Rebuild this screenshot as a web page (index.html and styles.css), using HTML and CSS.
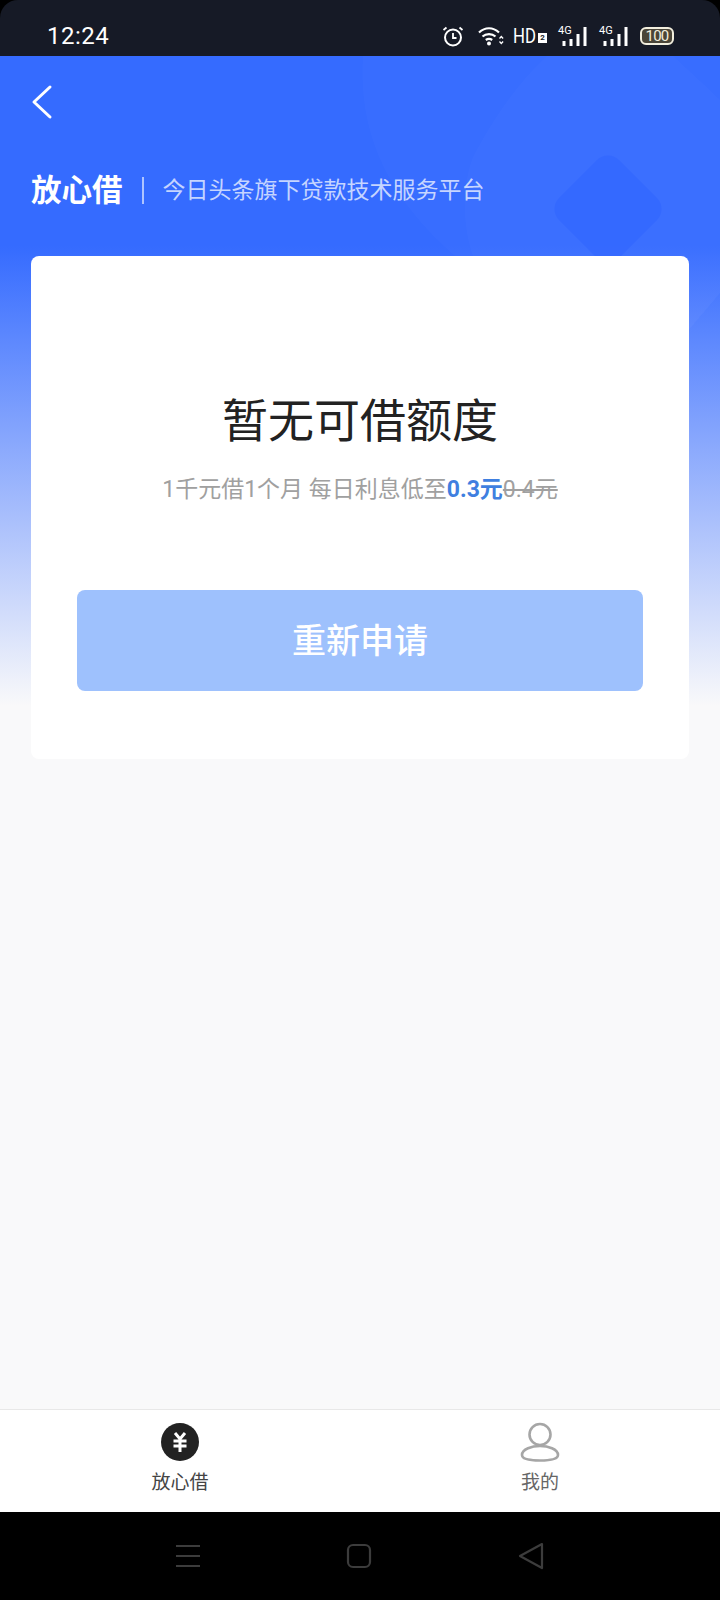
FILE: index.html
```html
<!DOCTYPE html>
<html lang="zh-CN">
<head>
    <meta charset="UTF-8">
    <meta name="viewport" content="width=device-width, initial-scale=1.0">
    <title>放心借</title>
    <link rel="stylesheet" href="styles.css">
</head>
<body>
    <div class="screen">
        <div class="status-bar">
            <span class="clock">12:24</span>
            <div class="status-icons">
                <svg class="alarm" width="22" height="22" viewBox="0 0 22 22" fill="none" stroke="#fff">
                    <circle cx="11" cy="12.500" r="8" stroke-width="2"/>
                    <path d="M11 8v5h3.500" stroke-width="1.800"/>
                    <path d="M1.500 5 4.500 2.500M20.500 5 17.500 2.500" stroke-width="1.800"/>
                </svg>
                <svg class="wifi" width="26" height="20" viewBox="0 0 26 20" fill="none" stroke="#fff" stroke-width="2.200">
                    <path d="M1 6.500C7 .8 15 .8 21 6.500"/>
                    <path d="M4.500 10.500C8 7.300 14 7.300 17.500 10.500"/>
                    <path d="M7.800 14C9.800 12.500 12.200 12.500 14.200 14"/>
                    <circle cx="11" cy="17.500" r="2" fill="#fff" stroke="none"/>
                    <path d="M21.500 12.500l1.800-2 1.800 2M21.500 15.500l1.800 2 1.800-2" stroke-width="1.300"/>
                </svg>
                <span class="hd"><span class="hd-text">HD</span><b>2</b></span>
                <span class="signal"><i>4G</i><svg width="29" height="20" viewBox="0 0 29 20" fill="#fff"><rect x="4.500" y="15" width="3" height="5"/><rect x="11.500" y="13" width="3" height="7"/><rect x="18.500" y="8" width="3" height="12"/><rect x="25.500" y="1" width="3" height="19"/></svg></span>
                <span class="signal"><i>4G</i><svg width="29" height="20" viewBox="0 0 29 20" fill="#fff"><rect x="4.500" y="15" width="3" height="5"/><rect x="11.500" y="13" width="3" height="7"/><rect x="18.500" y="8" width="3" height="12"/><rect x="25.500" y="1" width="3" height="19"/></svg></span>
                <span class="battery">100</span>
            </div>
        </div>

        <div class="page">
            <svg class="hero-art" width="720" height="330" viewBox="0 0 720 330">
                <path d="M363 56C358 130 385 195 455 256L490 330H689L720 293V56Z" fill="#fff" opacity="0.018"/>
                <path d="M547 56C515 85 490 125 473 157C462 185 462 225 473 256L490 330H689L720 293V100C705 85 690 72 673 56Z" fill="#fff" opacity="0.018"/>
                <rect x="565.500" y="166.500" width="85" height="85" rx="16" transform="rotate(45 608 209)" fill="#2f64ff" opacity="0.55"/>
            </svg>

            <div class="nav">
                <svg width="24" height="36" viewBox="0 0 24 36" fill="none" stroke="#fff" stroke-width="3" stroke-linecap="round" stroke-linejoin="round">
                    <path d="M19 3 3 18 19 33"/>
                </svg>
            </div>

            <div class="brand">
                <span class="brand-name">放心借</span>
                <span class="brand-line"></span>
                <span class="brand-desc">今日头条旗下贷款技术服务平台</span>
            </div>

            <div class="card">
                <h1>暂无可借额度</h1>
                <p class="rate">1千元借1个月 每日利息低至<b>0.3元</b><s>0.4元</s></p>
                <button class="apply" type="button">重新申请</button>
            </div>
        </div>

        <div class="tabbar">
            <div class="tab tab-active">
                <svg width="40" height="40" viewBox="0 0 40 40">
                    <circle cx="20" cy="20" r="19" fill="#222"/>
                    <path d="M15 11l5 6 5-6M13.500 19h13M13.500 24h13M20 17v13" fill="none" stroke="#fff" stroke-width="3"/>
                </svg>
                <span>放心借</span>
            </div>
            <div class="tab">
                <svg width="40" height="40" viewBox="0 0 40 40" fill="none" stroke="#a6a6a6" stroke-width="2.600">
                    <circle cx="20" cy="12.500" r="10.500"/>
                    <path d="M2 33C2 27 12 24 20 24C28 24 38 27 38 33C38 38 28 38.500 20 38.500C12 38.500 2 38 2 33Z"/>
                </svg>
                <span>我的</span>
            </div>
        </div>

        <div class="nav-bar">
            <svg width="24" height="24" viewBox="0 0 24 24" stroke="#3c3c3c" stroke-width="2">
                <path d="M0 2h24M0 12h24M0 22h24"/>
            </svg>
            <svg width="26" height="26" viewBox="0 0 26 26" fill="none" stroke="#3c3c3c" stroke-width="2.200">
                <rect x="2" y="2" width="22" height="22" rx="5"/>
            </svg>
            <svg width="26" height="28" viewBox="0 0 26 28" fill="none" stroke="#3c3c3c" stroke-width="2.200" stroke-linejoin="round">
                <path d="M24 2 2 14 24 26Z"/>
            </svg>
        </div>
    </div>
</body>
</html>
```

FILE: styles.css
```css
* {
    box-sizing: border-box;
}
body {
    margin: 0;
    background: #000;
    font-family: Roboto, "Noto Sans CJK SC", sans-serif;
}
.screen {
    width: 720px;
    height: 1600px;
    display: flex;
    flex-direction: column;
    overflow: hidden;
    background: #000;
}
.status-bar {
    height: 56px;
    flex: none;
    display: flex;
    align-items: center;
    justify-content: space-between;
    padding: 16px 46px 0 47px;
    background: #161a26;
    border-radius: 18px 18px 0 0;
    color: #fff;
}
.clock {
    font-size: 24px;
    letter-spacing: 0.5px;
}
.status-icons {
    display: flex;
    align-items: center;
}
.wifi {
    margin-left: 14px;
}
.hd {
    width: 34px;
    margin-left: 9px;
    font-size: 21px;
    display: flex;
    align-items: flex-end;
}
.hd-text {
    width: 23px;
    transform: scaleX(0.8);
    transform-origin: left;
}
.hd b {
    width: 9px;
    height: 10px;
    margin-bottom: 5px;
    margin-left: 2px;
    background: #fff;
    color: #161a26;
    font-size: 8px;
    line-height: 10px;
    text-align: center;
}
.signal {
    position: relative;
    display: block;
    height: 20px;
    width: 29px;
    margin-left: 11px;
}
.signal svg {
    display: block;
}
.signal i {
    position: absolute;
    left: 0;
    top: -1px;
    font-style: normal;
    font-size: 11px;
    line-height: 12px;
}
.signal + .signal {
    margin-left: 12px;
}
.battery {
    width: 34px;
    height: 18px;
    margin-left: 12px;
    border: 2px solid #f2eedd;
    border-radius: 6px;
    background: #4a4538;
    color: #f2eedd;
    font-size: 15px;
    line-height: 14px;
    text-align: center;
    letter-spacing: -0.8px;
}
.page {
    flex: 1;
    position: relative;
    padding: 0 31px;
    background: linear-gradient(#356bff 0, #356bff 190px, #f9f9fa 650px);
}
.hero-art {
    position: absolute;
    left: 0;
    top: -56px;
}
.nav {
    position: relative;
    height: 88px;
    padding-top: 28px;
}
.nav svg {
    display: block;
}
.brand {
    position: relative;
    height: 112px;
    padding-top: 27px;
    display: flex;
    align-items: flex-start;
}
.brand-name {
    font-size: 30.500px;
    line-height: 40px;
    font-weight: 700;
    color: #fff;
}
.brand-line {
    width: 2px;
    height: 27px;
    margin: 6px 19px 0 19px;
    background: rgba(255, 255, 255, 0.6);
}
.brand-desc {
    font-size: 23px;
    line-height: 40px;
    color: rgba(255, 255, 255, 0.72);
}
.card {
    position: relative;
    height: 503px;
    padding: 138px 46px 0;
    background: #fff;
    border-radius: 8px;
    text-align: center;
}
.card h1 {
    margin: 0;
    font-size: 46px;
    line-height: 54px;
    font-weight: 400;
    color: #222;
}
.rate {
    margin: 26px 0 0;
    font-size: 23px;
    line-height: 32px;
    color: #a0a0a0;
    white-space: nowrap;
}
.rate b {
    color: #3f7fe0;
}
.apply {
    display: block;
    width: 566px;
    height: 101px;
    margin-top: 84px;
    padding: 0 0 4px;
    border: none;
    border-radius: 8px;
    background: #9ec1fd;
    color: #fff;
    font-family: inherit;
    font-size: 34px;
    font-weight: 500;
}
.tabbar {
    height: 103px;
    flex: none;
    display: flex;
    background: #fff;
    border-top: 1px solid #e8e8e8;
}
.tab {
    flex: 1;
    display: flex;
    flex-direction: column;
    align-items: center;
    padding-top: 12px;
    font-size: 19px;
    line-height: 28px;
    color: #666;
}
.tab svg {
    display: block;
    margin-bottom: 7px;
}
.tab-active {
    color: #444;
}
.nav-bar {
    height: 88px;
    flex: none;
    display: flex;
    align-items: center;
    justify-content: center;
    gap: 146px;
    background: #000;
}
```
